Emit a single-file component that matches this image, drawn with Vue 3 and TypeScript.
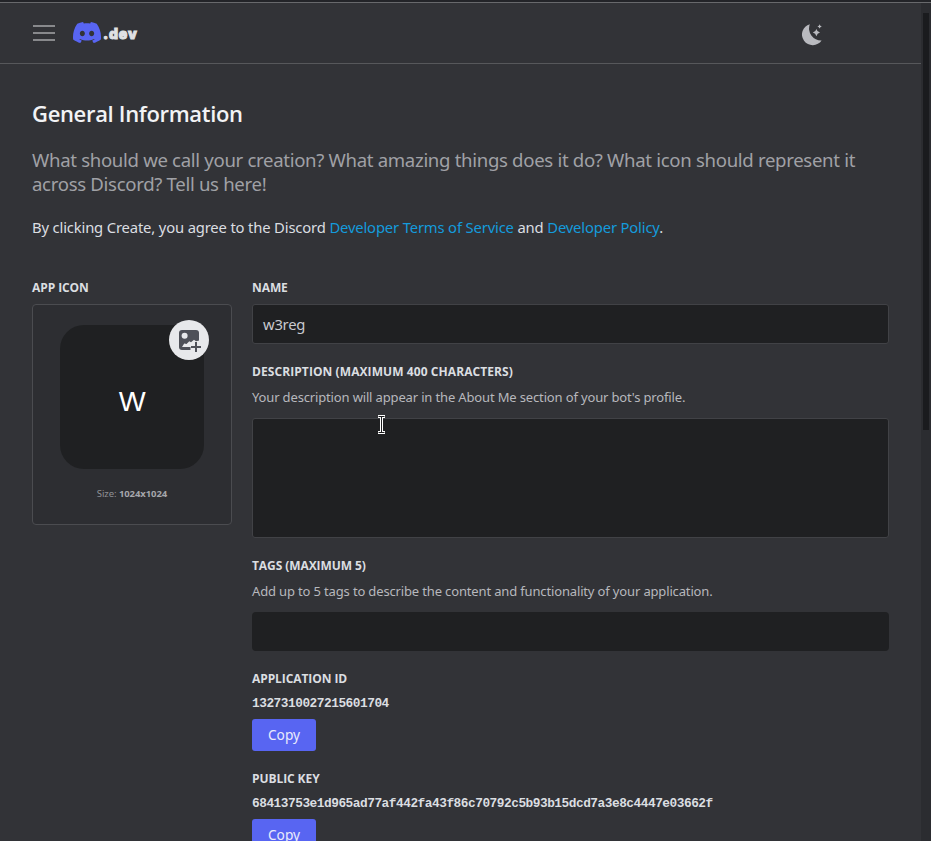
<script setup lang="ts">
interface KeyField {
  label: string
  value: string
}

const keys: KeyField[] = [
  { label: 'Application ID', value: '1327310027215601704' },
  { label: 'Public Key', value: '68413753e1d965ad77af442fa43f86c70792c5b93b15dcd7a3e8c4447e03662f' },
]
</script>

<template>
  <div class="window">
    <div class="page">
      <header class="topbar">
        <button class="menu" aria-label="Menu"><i></i><i></i><i></i></button>
        <div class="brand">
          <svg class="mark" viewBox="0 2.85 24 18.3" preserveAspectRatio="none">
            <path d="M20.317 4.3698a19.7913 19.7913 0 00-4.8851-1.5152.0741.0741 0 00-.0785.0371c-.211.3753-.4447.8648-.6083 1.2495-1.8447-.2762-3.68-.2762-5.4868 0-.1636-.3933-.4058-.8742-.6177-1.2495a.077.077 0 00-.0785-.037 19.7363 19.7363 0 00-4.8852 1.515.0699.0699 0 00-.0321.0277C.5334 9.0458-.319 13.5799.0992 18.0578a.0824.0824 0 00.0312.0561c2.0528 1.5076 4.0413 2.4228 5.9929 3.0294a.0777.0777 0 00.0842-.0276c.4616-.6304.8731-1.2952 1.226-1.9942a.076.076 0 00-.0416-.1057c-.6528-.2476-1.2743-.5495-1.8722-.8923a.077.077 0 01-.0076-.1277c.1258-.0943.2517-.1923.3718-.2914a.0743.0743 0 01.0776-.0105c3.9278 1.7933 8.18 1.7933 12.0614 0a.0739.0739 0 01.0785.0095c.1202.099.246.1981.3728.2924a.077.077 0 01-.0066.1276 12.2986 12.2986 0 01-1.873.8914.0766.0766 0 00-.0407.1067c.3604.698.7719 1.3628 1.225 1.9932a.076.076 0 00.0842.0286c1.961-.6067 3.9495-1.5219 6.0023-3.0294a.077.077 0 00.0313-.0552c.5004-5.177-.8382-9.6739-3.5485-13.6604a.061.061 0 00-.0312-.0286zM8.02 15.3312c-1.1825 0-2.1569-1.0857-2.1569-2.419 0-1.3332.9555-2.4189 2.157-2.4189 1.2108 0 2.1757 1.0952 2.1568 2.419 0 1.3332-.9555 2.4189-2.1569 2.4189zm7.9748 0c-1.1825 0-2.1569-1.0857-2.1569-2.419 0-1.3332.9554-2.4189 2.1569-2.4189 1.2108 0 2.1757 1.0952 2.1568 2.419 0 1.3332-.946 2.4189-2.1568 2.4189Z" />
          </svg>
          <span class="dev">.dev</span>
        </div>
        <svg class="moon" viewBox="0 0 22 23">
          <path d="M8.8 1.2A12 12 0 0 0 20.6 17.4A10.7 10.7 0 1 1 8.8 1.2Z" />
          <path d="M15.4 6Q16.1 9 19 9.6Q16.1 10.2 15.4 13.2Q14.7 10.2 11.8 9.6Q14.7 9 15.4 6Z" />
          <path d="M18.6 1.2Q19 3 20.8 3.4Q19 3.8 18.6 5.6Q18.2 3.8 16.4 3.4Q18.2 3 18.6 1.2Z" />
        </svg>
      </header>

      <main>
        <h1>General Information</h1>
        <p class="lead">What should we call your creation? What amazing things does it do? What icon should represent it<br />across Discord? Tell us here!</p>
        <p class="terms">By clicking Create, you agree to the Discord <a>Developer Terms of Service</a> and <a>Developer Policy</a>.</p>

        <div class="columns">
          <section class="icon-col">
            <h2>App Icon</h2>
            <div class="card">
              <div class="avatar">
                <span>W</span>
                <button class="upload" aria-label="Upload image">
                  <svg viewBox="0 0 24 24">
                    <path class="frame" d="M5 2H19Q22 2 22 5V19Q22 22 19 22H5Q2 22 2 19V5Q2 2 5 2Z" />
                    <circle class="sun" cx="7.6" cy="7.8" r="3" />
                    <path class="hill" d="M5 19L7.2 15.4L9.5 16L12.3 13.2L14 14.2L17 11.7L19 13.2L22.2 12.6V24H13.5V19Z" />
                    <path class="plus" d="M19 14V24M14 19H24" />
                  </svg>
                </button>
              </div>
              <p class="size">Size: <b>1024x1024</b></p>
            </div>
          </section>

          <section class="fields">
            <h2>Name</h2>
            <div class="input">w3reg</div>
            <h2 class="gap wide">Description (maximum 400 characters)</h2>
            <p class="hint">Your description will appear in the About Me section of your bot's profile.</p>
            <div class="area">
              <svg class="cursor" viewBox="0 0 9 19">
                <path class="halo" d="M1 1.5H8M4.5 1.5V17.5M1 17.5H8" />
                <path class="beam" d="M1.5 1.5H7.5M4.5 1.5V17.5M1.5 17.5H7.5" />
              </svg>
            </div>
            <h2 class="gap">Tags (maximum 5)</h2>
            <p class="hint">Add up to 5 tags to describe the content and functionality of your application.</p>
            <div class="tags"></div>
            <template v-for="k in keys" :key="k.label">
              <h2 class="gap">{{ k.label }}</h2>
              <code>{{ k.value }}</code>
              <button class="copy">Copy</button>
            </template>
          </section>
        </div>
      </main>
    </div>
    <div class="scrollbar"><i></i></div>
  </div>
</template>

<style>
body {
  background: #313338;
  overflow: hidden;
}
</style>

<style scoped>
* {
  box-sizing: border-box;
}
h1, h2, p {
  margin: 0;
}
button {
  border: 0;
  padding: 0;
  font: inherit;
}
.window {
  height: 841px;
  overflow: hidden;
  display: flex;
  border-top: 2px solid #232428;
  background: #323337;
  font-family: "Noto Sans", sans-serif;
  color: #dbdee1;
}
.page {
  flex: 1;
  min-width: 0;
  border-top: 1px solid #68696c;
}
.topbar {
  height: 61px;
  border-bottom: 1px solid #57585b;
  display: flex;
  align-items: center;
  padding: 0 98px 0 33px;
}
.menu {
  width: 22px;
  height: 16px;
  background: none;
  display: flex;
  flex-direction: column;
  justify-content: space-between;
}
.menu i {
  height: 2px;
  width: 22px;
  background: #88898c;
}
.brand {
  margin-left: 18px;
  display: flex;
  align-items: center;
}
.mark {
  width: 28px;
  height: 21px;
  margin-bottom: 1px;
  fill: #5865f2;
}
.dev {
  margin: 2px 0 0 2px;
  font: 900 14px/20px Inter, sans-serif;
  letter-spacing: 0.8px;
  -webkit-text-stroke: 0.9px #e0e1e4;
  color: #e0e1e4;
}
.moon {
  width: 22px;
  height: 23px;
  margin: 2px 0 0 auto;
  fill: #b9babf;
}
main {
  padding: 35px 32px 0;
}
h1 {
  font: 600 22px/28px "Open Sans", sans-serif;
  letter-spacing: -0.33px;
  color: #f2f3f5;
}
.lead {
  margin-top: 21px;
  font-size: 18.6px;
  line-height: 24px;
  letter-spacing: -0.32px;
  color: #a0a1a6;
  white-space: nowrap;
}
.terms {
  margin-top: 21px;
  font-size: 14.8px;
  line-height: 20px;
  letter-spacing: -0.16px;
  white-space: nowrap;
}
.terms a {
  color: #149bdc;
}
.columns {
  margin-top: 43px;
  display: flex;
  gap: 20px;
}
.icon-col {
  width: 200px;
}
h2 {
  font: 700 12px/16px "Open Sans", sans-serif;
  letter-spacing: -0.08px;
  text-transform: uppercase;
}
.wide {
  letter-spacing: 0.08px;
}
.card {
  margin-top: 8px;
  height: 221px;
  border: 1px solid #4b4c50;
  border-radius: 4px;
  background: #2d2e32;
  display: flex;
  flex-direction: column;
  align-items: center;
  padding-top: 20px;
}
.avatar {
  position: relative;
  width: 144px;
  height: 144px;
  border-radius: 24px;
  background: #1f2022;
  display: flex;
  align-items: center;
  justify-content: center;
  font: 400 25px/30px Inter, sans-serif;
  color: #fff;
}
.avatar > span {
  padding-top: 10px;
  transform: scaleX(1.14);
}
.upload {
  position: absolute;
  top: -5px;
  right: -5px;
  width: 40px;
  height: 40px;
  border-radius: 50%;
  background: #e7e8eb;
  display: flex;
  align-items: center;
  justify-content: center;
}
.upload svg {
  width: 24px;
  height: 24px;
}
.frame {
  fill: #4e5058;
}
.sun, .hill {
  fill: #e7e8eb;
}
.plus {
  stroke: #4e5058;
  stroke-width: 2;
}
.size {
  margin-top: 18px;
  font-size: 9.5px;
  line-height: 14px;
  letter-spacing: -0.08px;
  color: #909196;
}
.size b {
  color: #a5a6ab;
}
.fields {
  width: 637px;
}
.input {
  margin-top: 8px;
  height: 40px;
  border: 1px solid #414246;
  border-radius: 3px;
  background: #1f2022;
  padding: 0 10px;
  font-size: 14.8px;
  line-height: 38px;
  letter-spacing: -0.25px;
  color: #c9cacf;
}
.gap {
  margin-top: 20px;
}
.hint {
  margin-top: 8px;
  font-size: 13px;
  line-height: 18px;
  letter-spacing: -0.15px;
  color: #b7b8bd;
  white-space: nowrap;
}
.area {
  position: relative;
  margin-top: 12px;
  height: 120px;
  border: 1px solid #414246;
  border-radius: 3px;
  background: #1f2022;
}
.cursor {
  position: absolute;
  left: 124px;
  top: -4px;
  width: 9px;
  height: 19px;
}
.cursor path {
  fill: none;
}
.halo {
  stroke: #fff;
  stroke-width: 3;
}
.beam {
  stroke: #1b1c1e;
  stroke-width: 1;
}
.tags {
  margin-top: 12px;
  height: 39px;
  border-radius: 4px;
  background: #1f2022;
}
code {
  display: block;
  margin-top: 9px;
  font: 700 12.8px/16px "Liberation Mono", monospace;
  letter-spacing: -0.48px;
}
.copy {
  display: block;
  margin-top: 7px;
  width: 64px;
  height: 32px;
  border-radius: 3px;
  background: #5865f2;
  color: #e9eafc;
  font-size: 13.7px;
  line-height: 32px;
}
.scrollbar {
  width: 10px;
  background: #2b2c30;
  padding: 10px 2px 0;
  border-top: 1px solid #68696c;
}
.scrollbar i {
  display: block;
  height: 417px;
  background: #1a1b1e;
}
</style>
